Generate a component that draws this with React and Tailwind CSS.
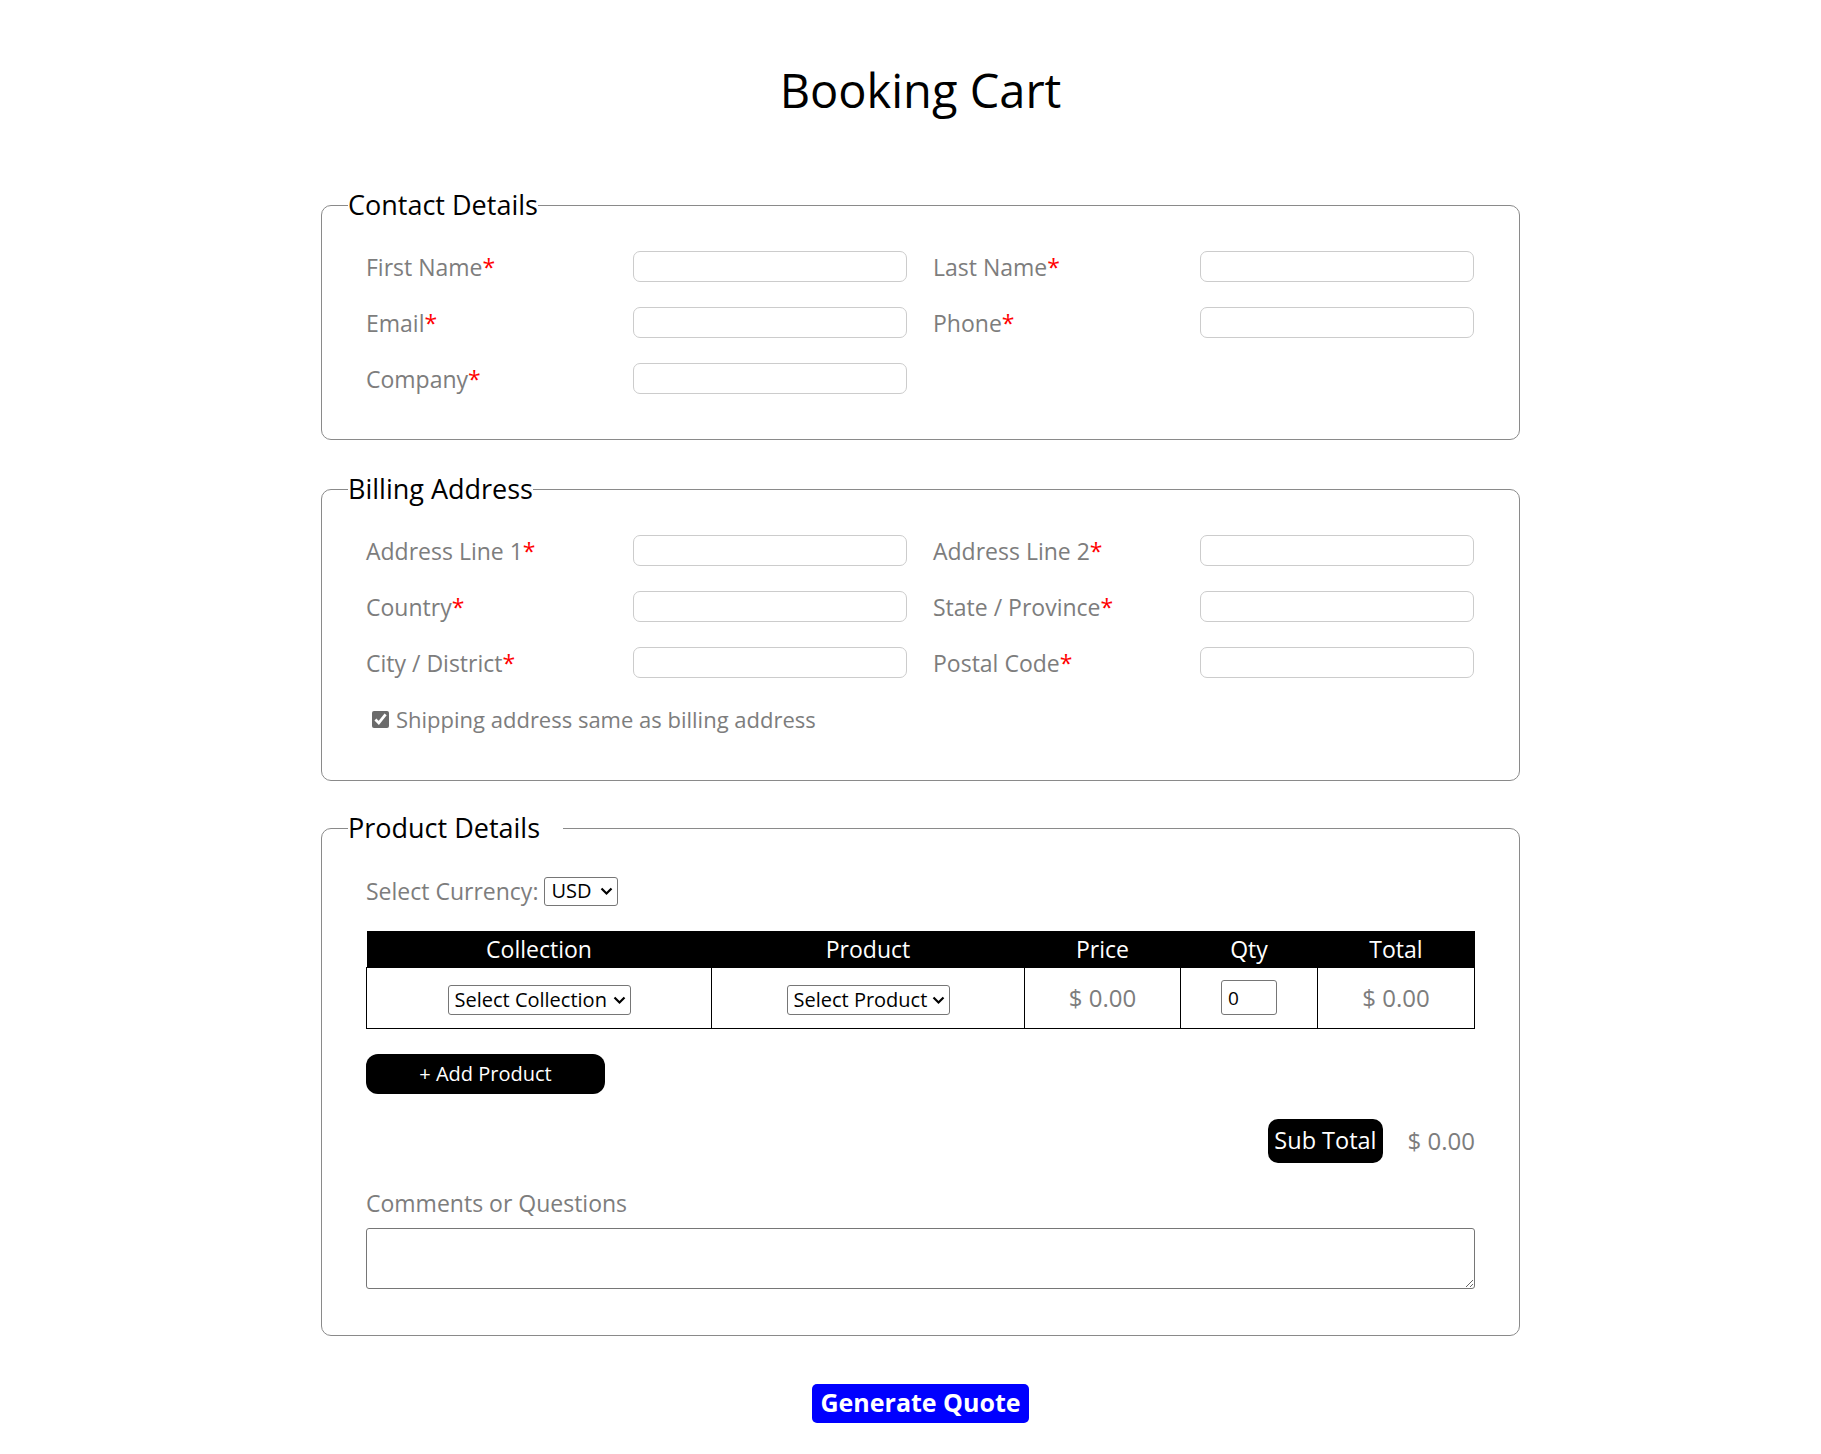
const Req = () => <span className="text-[#ff0000]">*</span>;

const Field = ({ label }) => (
  <>
    <label className="text-[23px] leading-[30px] text-[#7d7d7d]">
      {label}
      <Req />
    </label>
    <div>
      <input
        type="text"
        className="block w-[274px] h-[31px] border border-[#cccccc] rounded-[7px] bg-white px-2 text-[18px]"
      />
    </div>
  </>
);

const Section = ({ title, legendClass = "", children, className = "" }) => (
  <fieldset
    className={`border border-[#8a8a8a] rounded-[10px] px-[26px] pt-[28px] ${className}`}
  >
    <legend className={`text-[27px] leading-[36px] text-black ${legendClass}`}>
      {title}
    </legend>
    <div className="px-[18px]">{children}</div>
  </fieldset>
);

const FieldGrid = ({ children }) => (
  <div className="grid grid-cols-[267px_300px_267px_274px] gap-y-[25px] items-center">
    {children}
  </div>
);

// native select with a drawn chevron, like the bold one in the reference
const Select = ({ text, className = "" }) => (
  <span className={`relative inline-block align-middle ${className}`}>
    <select className="block h-full w-full appearance-none border border-[#767676] rounded-[3px] bg-white pl-[6px] pr-[20px] text-[20px] leading-none text-black">
      <option>{text}</option>
    </select>
    <svg
      className="pointer-events-none absolute right-[5px] top-1/2 -translate-y-1/2"
      width="13"
      height="9"
      viewBox="0 0 13 9"
    >
      <path d="M1.5 2l5 5 5-5" stroke="black" strokeWidth="2.2" fill="none" />
    </svg>
  </span>
);

export default function App() {
  return (
    <div className="min-h-[1454px] bg-white pt-[67px] pb-[30px] pl-[20px] font-['Open_Sans',sans-serif] text-black">
      <div className="mx-auto w-[1199px]">
        <h1 className="text-center text-[47px] leading-[46px] font-normal">
          Booking Cart
        </h1>

        <Section title="Contact Details" className="mt-[74px] pb-[45px]">
          <FieldGrid>
            <Field label="First Name" />
            <Field label="Last Name" />
            <Field label="Email" />
            <Field label="Phone" />
            <Field label="Company" />
          </FieldGrid>
        </Section>

        <Section title="Billing Address" className="mt-[31px] pb-[46px]">
          <FieldGrid>
            <Field label="Address Line 1" />
            <Field label="Address Line 2" />
            <Field label="Country" />
            <Field label="State / Province" />
            <Field label="City / District" />
            <Field label="Postal Code" />
          </FieldGrid>
          <label className="mt-[26px] flex items-center pl-[6px] text-[22px] leading-[30px] text-[#7d7d7d]">
            <input
              type="checkbox"
              defaultChecked
              className="w-[17px] h-[17px] mr-[7px] accent-[#6b6b6b]"
            />
            Shipping address same as billing address
          </label>
        </Section>

        <Section
          title="Product Details"
          legendClass="pr-[23px]"
          className="mt-[29px] pb-[46px]"
        >
          <div className="mt-[2px] flex items-center text-[23px] leading-[30px] text-[#7d7d7d]">
            <span>Select Currency:</span>
            <Select text="USD" className="ml-[6px] h-[29px] w-[74px]" />
          </div>

          <table className="mt-[25px] w-full table-fixed border-collapse">
            <colgroup>
              <col className="w-[345px]" />
              <col className="w-[313px]" />
              <col className="w-[156px]" />
              <col className="w-[137px]" />
              <col />
            </colgroup>
            <thead>
              <tr className="h-[36px] bg-black text-white text-[23px]">
                <th className="font-normal">Collection</th>
                <th className="font-normal">Product</th>
                <th className="font-normal">Price</th>
                <th className="font-normal">Qty</th>
                <th className="font-normal">Total</th>
              </tr>
            </thead>
            <tbody>
              <tr className="h-[61px] text-center text-[24px] text-[#7d7d7d]">
                <td className="border border-black">
                  <Select text="Select Collection" className="h-[30px] w-[183px]" />
                </td>
                <td className="border border-black">
                  <Select text="Select Product" className="h-[30px] w-[163px]" />
                </td>
                <td className="border border-black">$ 0.00</td>
                <td className="border border-black">
                  <input
                    type="number"
                    defaultValue={0}
                    className="mx-auto block h-[35px] w-[56px] border border-[#767676] rounded-[3px] pl-[6px] text-[19px] text-black"
                  />
                </td>
                <td className="border border-black">$ 0.00</td>
              </tr>
            </tbody>
          </table>

          <button className="mt-[25px] block h-[40px] w-[239px] rounded-[12px] bg-black text-[20px] text-white">
            + Add Product
          </button>

          <div className="mt-[25px] flex items-center justify-end">
            <span className="flex h-[44px] items-center rounded-[10px] bg-black px-[6px] text-[23.5px] text-white">
              Sub Total
            </span>
            <span className="ml-[25px] text-[24px] text-[#7d7d7d]">$ 0.00</span>
          </div>

          <div className="mt-[25px] text-[23px] leading-[30px] text-[#7d7d7d]">
            Comments or Questions
          </div>
          <textarea className="mt-[10px] block h-[61px] w-full border border-[#767676] rounded-[3px] bg-white" />
        </Section>

        <button className="mx-auto mt-[48px] block h-[39px] w-[217px] rounded-[5px] bg-[#0000ff] text-[25px] font-bold text-white">
          Generate Quote
        </button>
      </div>
    </div>
  );
}
